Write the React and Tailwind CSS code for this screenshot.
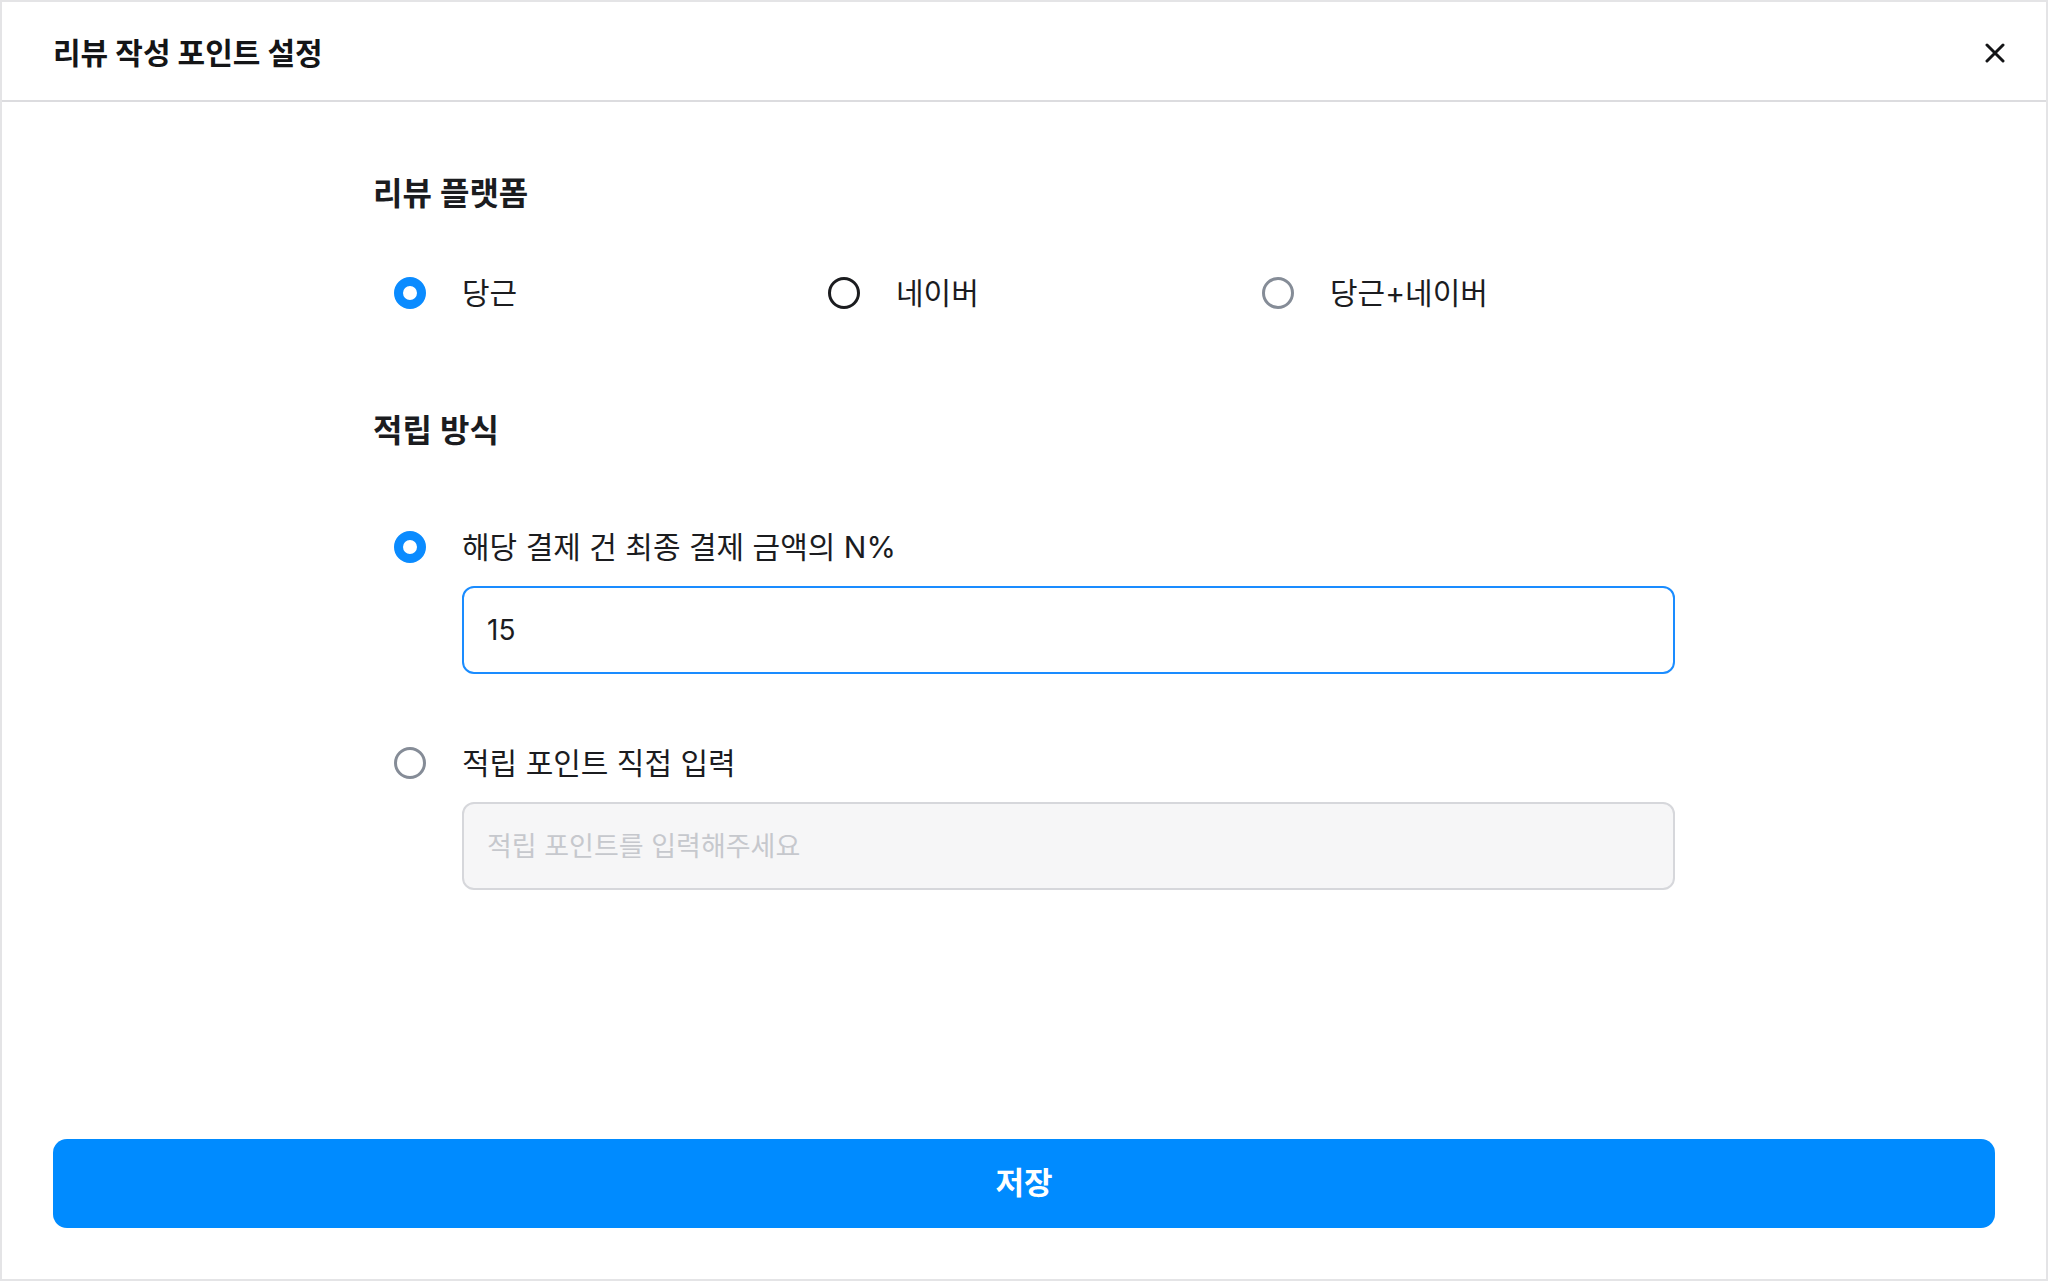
import { useState } from "react";

const platforms = [
  { id: "daangn", label: "당근" },
  { id: "naver", label: "네이버" },
  { id: "both", label: "당근+네이버" },
];

// radio dot: selected = thick blue ring, otherwise a thin ring
function RadioDot({ checked, tone = "gray" }) {
  if (checked) {
    return <span className="block w-8 h-8 shrink-0 rounded-full border-[9px] border-[#0a8bff]" />;
  }
  const ring = tone === "dark" ? "border-[#1b1c1f]" : "border-[#858c97]";
  return <span className={`block w-8 h-8 shrink-0 rounded-full border-[3px] ${ring}`} />;
}

function RadioRow({ checked, tone, label, onClick }) {
  return (
    <button
      type="button"
      onClick={onClick}
      className="flex items-center gap-[36px] h-10 pl-[21px] text-left"
    >
      <RadioDot checked={checked} tone={tone} />
      <span className="text-[30px] leading-10 text-[#1b1c1f]">{label}</span>
    </button>
  );
}

export default function App() {
  const [platform, setPlatform] = useState("daangn");
  const [mode, setMode] = useState("percent");
  const [percent, setPercent] = useState("15");
  const [points, setPoints] = useState("");

  return (
    <div className="w-full h-[1281px] flex flex-col bg-white border-2 border-[#e4e4e6] font-['Inter','Noto_Sans_CJK_KR',sans-serif] text-[#1b1c1f]">
      {/* Header */}
      <div className="h-[100px] shrink-0 flex items-center justify-between pt-[3px] pl-[51px] pr-[41px] border-b-2 border-[#dcdcdf]">
        <h1 className="text-[30px] font-bold leading-none text-[#141517]">리뷰 작성 포인트 설정</h1>
        <button type="button" className="w-5 h-5 flex items-center justify-center">
          <svg width="20" height="20" viewBox="0 0 20 20" fill="none">
            <path d="M2 2L18 18M18 2L2 18" stroke="#141517" strokeWidth="3" strokeLinecap="round" />
          </svg>
        </button>
      </div>

      {/* Body */}
      <div className="flex-1">
        <div className="w-[1302px] mx-auto pt-[71px]">
          <h2 className="text-[32px] font-semibold leading-[42px]">리뷰 플랫폼</h2>
          <div className="grid grid-cols-3 mt-[58px]">
            {platforms.map((p, i) => (
              <RadioRow
                key={p.id}
                checked={platform === p.id}
                tone={i === 1 ? "dark" : "gray"}
                label={p.label}
                onClick={() => setPlatform(p.id)}
              />
            ))}
          </div>

          <h2 className="text-[32px] font-semibold leading-[42px] mt-[97px]">적립 방식</h2>

          <div className="mt-[75px]">
            <RadioRow
              checked={mode === "percent"}
              label="해당 결제 건 최종 결제 금액의 N%"
              onClick={() => setMode("percent")}
            />
            <div className="pl-[89px] mt-[19px]">
              <input
                value={percent}
                onChange={(e) => setPercent(e.target.value)}
                className="w-full h-[88px] px-[23px] rounded-[12px] border-2 border-[#1a8cff] bg-white text-[28px] text-[#1b1c1f] outline-none"
              />
            </div>
          </div>

          <div className="mt-[69px]">
            <RadioRow
              checked={mode === "manual"}
              label="적립 포인트 직접 입력"
              onClick={() => setMode("manual")}
            />
            <div className="pl-[89px] mt-[19px]">
              <input
                value={points}
                disabled={mode !== "manual"}
                onChange={(e) => setPoints(e.target.value)}
                placeholder="적립 포인트를 입력해주세요"
                className="w-full h-[88px] px-[23px] rounded-[12px] border-2 border-[#d6d7db] bg-[#f6f6f7] text-[27px] text-[#1b1c1f] placeholder:text-[#c6c8cd] outline-none"
              />
            </div>
          </div>
        </div>
      </div>

      {/* Footer */}
      <div className="shrink-0 px-[51px] pb-[51px]">
        <button
          type="button"
          className="w-full h-[89px] rounded-[14px] bg-[#008bff] text-white text-[31px] font-semibold"
        >
          저장
        </button>
      </div>
    </div>
  );
}
